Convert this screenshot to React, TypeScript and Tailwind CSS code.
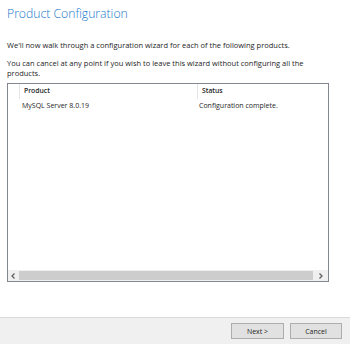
const font = { fontFamily: '"Open Sans", "Noto Sans", sans-serif' };

const Chevron = ({ dir }: { dir: "left" | "right" }) => (
  <svg width="5" height="6" viewBox="0 0 5 6" fill="none">
    <path
      d={dir === "left" ? "M3.5 0.5 L1 3 L3.5 5.5" : "M1.5 0.5 L4 3 L1.5 5.5"}
      stroke="#606060"
      strokeWidth="1.3"
    />
  </svg>
);

const App = () => {
  return (
    <div className="flex flex-col w-[350px] h-[344px] bg-white text-[#1e1e1e] overflow-hidden" style={font}>
      <div className="flex flex-col px-[7px] pt-[5px] flex-1">
        <h1 className="text-[12.2px] font-light leading-[18px] text-[#1979ca]">Product Configuration</h1>
        <p className="mt-[17px] text-[7.5px] leading-[10px]">
          We'll now walk through a configuration wizard for each of the following products.
        </p>
        <p className="mt-[8px] w-[300px] text-[7.5px] leading-[10px]">
          You can cancel at any point if you wish to leave this wizard without configuring all the products.
        </p>

        <div className="mt-[5px] w-[322px] h-[199px] border border-[#828790] flex flex-col">
          <div className="flex h-[15px] items-center text-[6.8px] font-semibold">
            <div className="w-[12px] h-full border-r border-[#e5e5e5]" />
            <div className="w-[178px] h-full pl-[4px] flex items-center border-r border-[#e5e5e5]">Product</div>
            <div className="pl-[4px]">Status</div>
          </div>
          <div className="flex h-[14px] items-center text-[7px]">
            <div className="w-[191px] pl-[14px]">MySQL Server 8.0.19</div>
            <div>Configuration complete.</div>
          </div>
          <div className="flex-1" />
          <div className="flex h-[11px] bg-[#f0f0f0] items-center">
            <div className="w-[11px] h-full flex items-center justify-center">
              <Chevron dir="left" />
            </div>
            <div className="w-[294px] h-[9px] bg-[#cdcdcd]" />
            <div className="flex-1 h-full flex items-center justify-center">
              <Chevron dir="right" />
            </div>
          </div>
        </div>
      </div>

      <div className="h-[27px] bg-[#f0f0f0] border-t border-[#d9d9d9] flex items-center justify-end gap-[6px] pr-[8px]">
        <button className="w-[53px] h-[16px] bg-[#e1e1e1] border border-[#adadad] text-[7px] leading-none">Next &gt;</button>
        <button className="w-[52px] h-[16px] bg-[#e1e1e1] border border-[#adadad] text-[7px] leading-none">Cancel</button>
      </div>
    </div>
  );
};

export default App;
